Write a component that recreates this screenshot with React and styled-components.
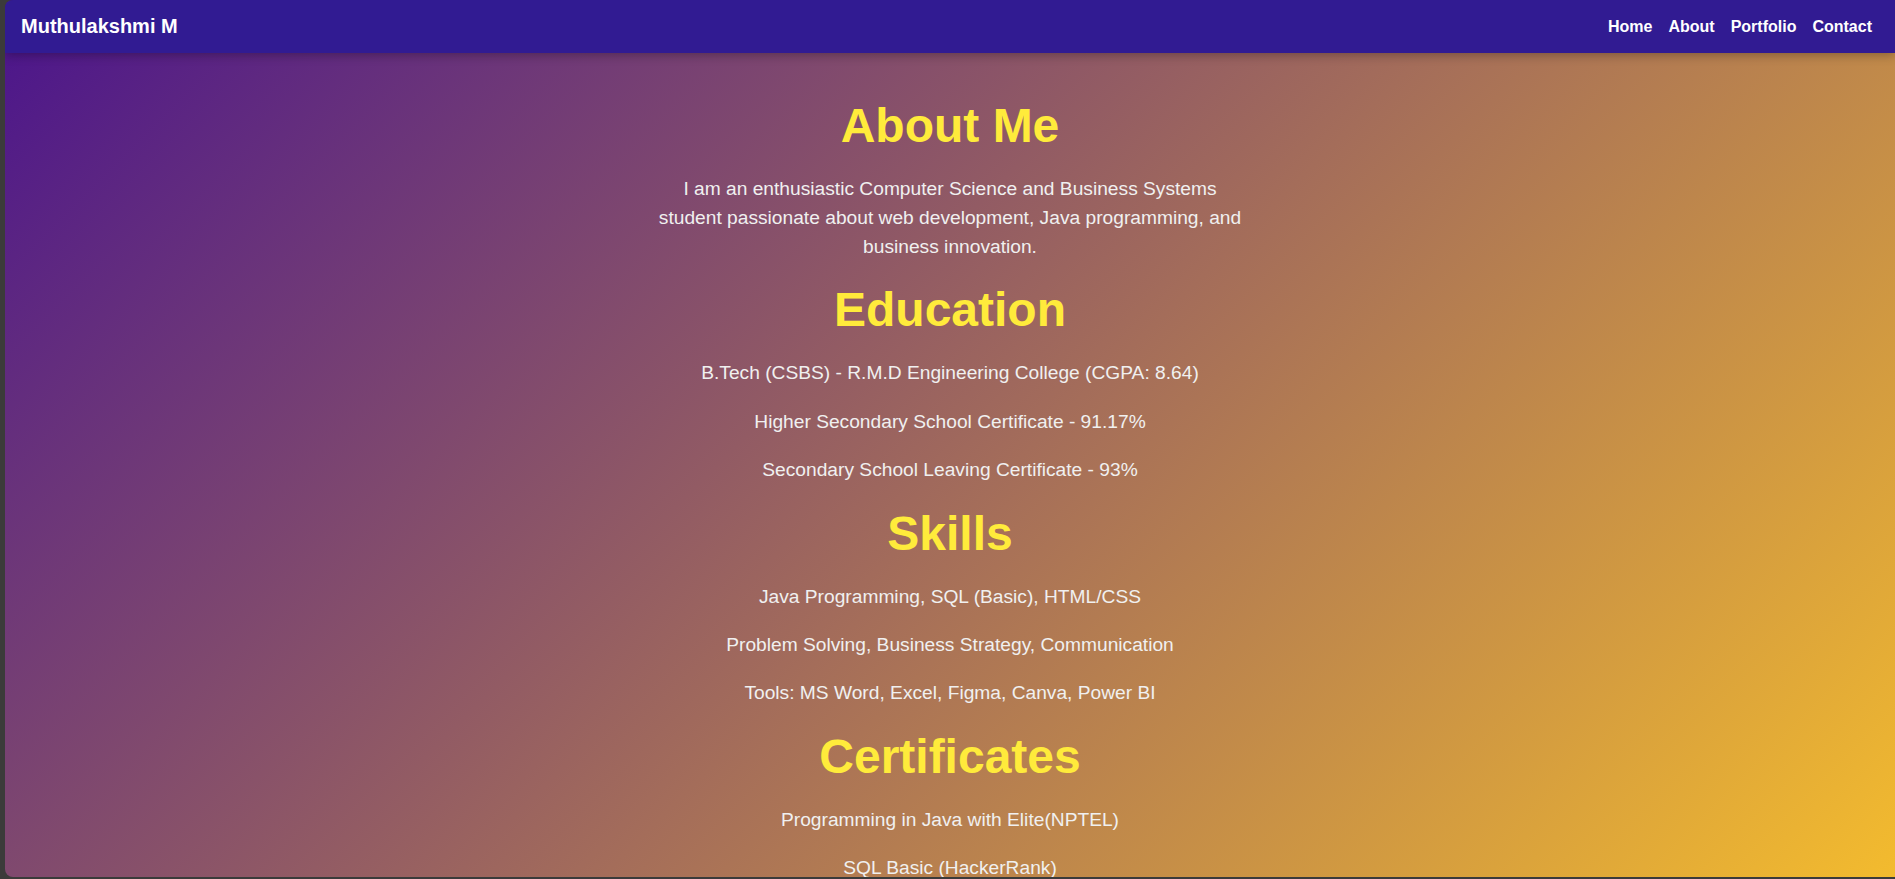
import React from 'react'
import styled, { createGlobalStyle } from 'styled-components'

const GlobalStyle = createGlobalStyle`
  html, body {
    margin: 0;
    padding: 0;
    background: #3b3b3a;
    font-family: "Liberation Sans", Arial, sans-serif;
    overflow: hidden;
  }
`

const Window = styled.div`
  margin-left: 5px;
  height: 877px;
  border-radius: 8px 0 0 8px;
  overflow: hidden;
  background: linear-gradient(135deg, #4a148c, #f3bb2e);
`

const Navbar = styled.nav`
  height: 53px;
  display: flex;
  align-items: center;
  justify-content: space-between;
  padding: 0 23px 0 16px;
  background: #311b92;
  box-shadow: 0 2px 10px rgba(0, 0, 0, 0.3);
  position: relative;
`

const Brand = styled.div`
  color: #fff;
  font-size: 20px;
  font-weight: bold;
`

const NavLinks = styled.div`
  display: flex;
  gap: 16px;
`

const NavLink = styled.a`
  color: #fff;
  font-size: 16px;
  font-weight: bold;
  text-decoration: none;
`

const Main = styled.main`
  padding-top: 24px;
  text-align: center;
`

const Heading = styled.h2`
  margin: 21px 0;
  font-size: 48px;
  line-height: 56px;
  color: #ffeb3b;
  font-weight: bold;
`

const Text = styled.p`
  margin: 19.5px auto;
  max-width: 600px;
  font-size: 19.2px;
  line-height: 1.5;
  color: #f0f0f0;
`

const sections = [
  {
    title: 'About Me',
    items: [
      'I am an enthusiastic Computer Science and Business Systems student passionate about web development, Java programming, and business innovation.',
    ],
  },
  {
    title: 'Education',
    items: [
      'B.Tech (CSBS) - R.M.D Engineering College (CGPA: 8.64)',
      'Higher Secondary School Certificate - 91.17%',
      'Secondary School Leaving Certificate - 93%',
    ],
  },
  {
    title: 'Skills',
    items: [
      'Java Programming, SQL (Basic), HTML/CSS',
      'Problem Solving, Business Strategy, Communication',
      'Tools: MS Word, Excel, Figma, Canva, Power BI',
    ],
  },
  {
    title: 'Certificates',
    items: ['Programming in Java with Elite(NPTEL)', 'SQL Basic (HackerRank)'],
  },
]

const App = () => {
  return (
    <>
      <GlobalStyle />
      <Window>
        <Navbar>
          <Brand>Muthulakshmi M</Brand>
          <NavLinks>
            <NavLink href="#home">Home</NavLink>
            <NavLink href="#about">About</NavLink>
            <NavLink href="#portfolio">Portfolio</NavLink>
            <NavLink href="#contact">Contact</NavLink>
          </NavLinks>
        </Navbar>
        <Main>
          {sections.map((section) => (
            <section key={section.title}>
              <Heading>{section.title}</Heading>
              {section.items.map((item) => (
                <Text key={item}>{item}</Text>
              ))}
            </section>
          ))}
        </Main>
      </Window>
    </>
  )
}

export default App
